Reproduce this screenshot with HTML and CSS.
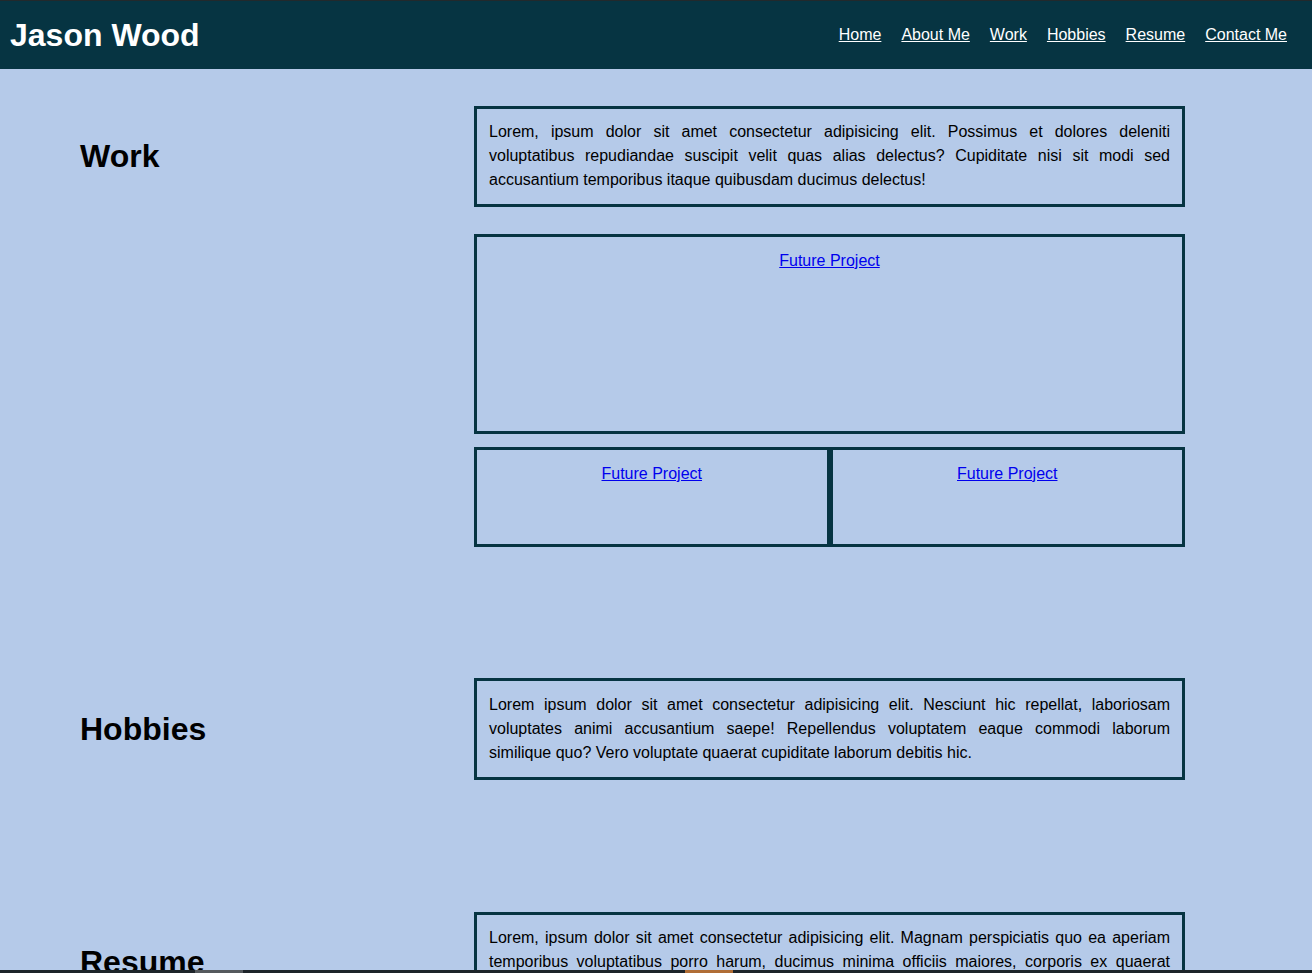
FILE: index.html
```html
<!DOCTYPE html>
<html lang="en">
<head>
<meta charset="utf-8">
<title>Jason Wood</title>
<link rel="stylesheet" href="styles.css">
</head>
<body>
<header class="site-header">
  <div class="brand">Jason Wood</div>
  <nav class="nav">
    <a href="#home">Home</a>
    <a href="#about">About Me</a>
    <a href="#work">Work</a>
    <a href="#hobbies">Hobbies</a>
    <a href="#resume">Resume</a>
    <a href="#contact">Contact Me</a>
  </nav>
</header>
<main class="main">
  <section class="section" id="work">
    <h2 class="section-title">Work</h2>
    <p class="text-box">Lorem, ipsum dolor sit amet consectetur adipisicing elit. Possimus et dolores deleniti voluptatibus repudiandae suscipit velit quas alias delectus? Cupiditate nisi sit modi sed accusantium temporibus itaque quibusdam ducimus delectus!</p>
    <div class="projects">
      <div class="project project-big"><a href="#">Future Project</a></div>
      <div class="project-row">
        <div class="project project-small"><a href="#">Future Project</a></div>
        <div class="project project-small"><a href="#">Future Project</a></div>
      </div>
    </div>
  </section>
  <section class="section section-hobbies" id="hobbies">
    <h2 class="section-title">Hobbies</h2>
    <p class="text-box text-box-tall">Lorem ipsum dolor sit amet consectetur adipisicing elit. Nesciunt hic repellat, laboriosam voluptates animi accusantium saepe! Repellendus voluptatem eaque commodi laborum similique quo? Vero voluptate quaerat cupiditate laborum debitis hic.</p>
  </section>
  <section class="section" id="resume">
    <h2 class="section-title">Resume</h2>
    <p class="text-box">Lorem, ipsum dolor sit amet consectetur adipisicing elit. Magnam perspiciatis quo ea aperiam temporibus voluptatibus porro harum, ducimus minima officiis maiores, corporis ex quaerat dolorum nemo! Quisquam, repellat.</p>
  </section>
</main>
<div class="taskbar">
  <span class="tb-item tb-gray"></span>
  <span class="tb-item tb-orange"></span>
</div>
</body>
</html>
```
FILE: styles.css
```css
html, body {
  margin: 0;
  padding: 0;
}
body {
  background: #b5cae9;
  font-family: "Liberation Sans", Arial, sans-serif;
  font-size: 16px;
  color: #000;
}
.site-header {
  box-sizing: border-box;
  height: 69px;
  border-top: 1px solid #22292c;
  background: #063442;
  display: flex;
  align-items: center;
  justify-content: space-between;
  padding: 0 25px 0 10px;
}
.brand {
  color: #fff;
  font-weight: bold;
  font-size: 32px;
}
.nav {
  display: flex;
  gap: 20px;
}
.nav a {
  color: #fff;
  text-decoration: underline;
  font-size: 16px;
}
.main {
  padding-top: 37px;
}
.section {
  display: grid;
  grid-template-columns: 394px 711px;
  grid-template-areas:
    "title text"
    ". projects";
  padding-left: 80px;
  margin-bottom: 131px;
}
.section-hobbies {
  margin-bottom: 132px;
}
.section-title {
  grid-area: title;
  align-self: center;
  margin: 0;
  font-size: 32px;
  font-weight: bold;
}
.text-box {
  grid-area: text;
  margin: 0;
  box-sizing: border-box;
  border: 3px solid #063442;
  padding: 11px 12px 12px;
  line-height: 24px;
  text-align: justify;
}
.text-box-tall {
  padding-top: 12px;
}
.projects {
  grid-area: projects;
  margin-top: 27px;
  display: flex;
  flex-direction: column;
  gap: 13px;
}
.project {
  box-sizing: border-box;
  border: 3px solid #063442;
  text-align: center;
  padding-top: 12px;
  line-height: 24px;
}
.project a {
  color: #0000ee;
}
.project-big {
  height: 200px;
}
.project-row {
  display: flex;
}
.project-small {
  flex: 1;
  height: 100px;
}
.taskbar {
  position: fixed;
  left: 0;
  right: 0;
  bottom: 0;
  height: 3px;
  background: #1d2429;
}
.tb-item {
  position: absolute;
  top: 0;
  height: 3px;
  width: 48px;
}
.tb-gray {
  left: 195px;
  background: #55595d;
}
.tb-orange {
  left: 685px;
  background: #b06d35;
}
```
